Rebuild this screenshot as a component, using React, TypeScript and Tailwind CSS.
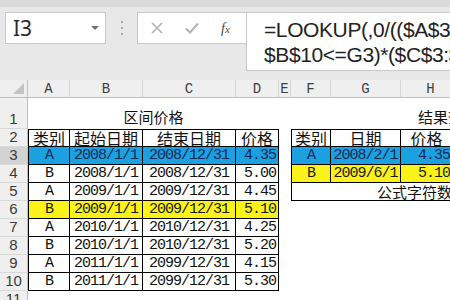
import type { ReactNode } from 'react';

const MONO = "font-['Liberation_Mono','Noto_Sans_CJK_SC',monospace]";
const CJK = "font-['Noto_Sans_CJK_SC',sans-serif]";

// column widths: A..H (H runs past the window edge)
const W = { A: 42, B: 73, C: 93, D: 43, E: 12, F: 40, G: 70, H: 60 };

type Fill = 'blue' | 'yellow' | null;

interface PriceRow {
  row: number;
  cat: string;
  start: string;
  end: string;
  price: string;
  fill: Fill;
}

const prices: PriceRow[] = [
  { row: 3, cat: 'A', start: '2008/1/1', end: '2008/12/31', price: '4.35', fill: 'blue' },
  { row: 4, cat: 'B', start: '2008/1/1', end: '2008/12/31', price: '5.00', fill: null },
  { row: 5, cat: 'A', start: '2009/1/1', end: '2009/12/31', price: '4.45', fill: null },
  { row: 6, cat: 'B', start: '2009/1/1', end: '2009/12/31', price: '5.10', fill: 'yellow' },
  { row: 7, cat: 'A', start: '2010/1/1', end: '2010/12/31', price: '4.25', fill: null },
  { row: 8, cat: 'B', start: '2010/1/1', end: '2010/12/31', price: '5.20', fill: null },
  { row: 9, cat: 'A', start: '2011/1/1', end: '2099/12/31', price: '4.15', fill: null },
  { row: 10, cat: 'B', start: '2011/1/1', end: '2099/12/31', price: '5.30', fill: null },
];

const results: { cat: string; date: string; price: string; fill: Fill }[] = [
  { cat: 'A', date: '2008/2/1', price: '4.35', fill: 'blue' },
  { cat: 'B', date: '2009/6/1', price: '5.10', fill: 'yellow' },
];

function fillClass(fill: Fill): string {
  if (fill === 'blue') return 'bg-[#1ba0e0] text-[#172a55]';
  if (fill === 'yellow') return 'bg-[#fbf21a] text-[#1a1a1a]';
  return 'bg-white text-[#111]';
}

function Cell({ w, className = '', children }: { w: number; className?: string; children?: ReactNode }) {
  return (
    <div className={`box-border flex h-full shrink-0 items-center overflow-visible whitespace-nowrap leading-[16px] ${className}`} style={{ width: w }}>
      {children}
    </div>
  );
}

function RowHead({ n, h, active = false }: { n: number; h: string; active?: boolean }) {
  return (
    <div className={`box-border flex w-[28px] shrink-0 items-end justify-center border-r border-b border-r-[#bfbfbf] border-b-[#d9d9d9] pb-[1px] font-['Liberation_Sans',sans-serif] text-[15px] leading-[16px] text-[#3a3a3a] ${h} ${active ? 'bg-[#d3d3d3]' : 'bg-[#efefef]'}`}>
      {n}
    </div>
  );
}

function Blank({ w }: { w: number }) {
  return <Cell w={w} className="bg-white" />;
}

export default function App() {
  const tb = 'border-black border-r border-b';
  const num = `${MONO} text-[15px] tracking-[-1px]`;
  return (
    <div className="h-[300px] w-[450px] overflow-hidden bg-[#e8e8e8]">
      <div className="h-[7px] bg-[#d9d9d9]" />

      {/* formula bar */}
      <div className="flex h-[73px] items-start pl-[5px] pt-[5px]">
        <div className="box-border flex h-[32px] w-[101px] shrink-0 items-center justify-between border border-[#c8c8c8] bg-white pl-[7px] pr-[6px]">
          <span className="font-['Noto_Sans',sans-serif] text-[21px] leading-none text-[#2a2a2a]">I3</span>
          <span className="h-0 w-0 border-x-[4px] border-t-[4px] border-x-transparent border-t-[#707070]" />
        </div>
        <div className="flex h-[32px] w-[31px] shrink-0 flex-col items-center justify-center gap-[4px]">
          <span className="h-[2px] w-[2px] bg-[#a8a8a8]" />
          <span className="h-[2px] w-[2px] bg-[#a8a8a8]" />
          <span className="h-[2px] w-[2px] bg-[#a8a8a8]" />
        </div>
        <div className="box-border flex h-[32px] w-[109px] shrink-0 items-center border border-r-0 border-[#c8c8c8] bg-white">
          <svg width="12" height="12" viewBox="0 0 12 12" className="ml-[13px]">
            <path d="M1 1 L11 11 M11 1 L1 11" stroke="#b4b4b4" strokeWidth="1.6" fill="none" />
          </svg>
          <svg width="14" height="12" viewBox="0 0 14 12" className="ml-[22px]">
            <path d="M1 6.5 L5 10.5 L13 1.5" stroke="#b4b4b4" strokeWidth="2" fill="none" />
          </svg>
          <span className="ml-[22px] font-['Liberation_Serif',serif] text-[14px] italic text-[#4a4a4a]">
            f<span className="text-[11px]">x</span>
          </span>
        </div>
        <div className="box-border h-[59px] min-w-0 flex-1 overflow-hidden border border-r-0 border-[#c8c8c8] bg-white pl-[17px] pt-[4px] font-['Liberation_Sans',sans-serif] text-[21px] leading-[25px] tracking-[-0.4px] whitespace-nowrap text-[#222]">
          <div>=LOOKUP(,0/(($A$3:$A$10=F3)*($B$3:</div>
          <div>$B$10&lt;=G3)*($C$3:$C$10&gt;=G3)),$D$3:$D$10)</div>
        </div>
      </div>

      {/* sheet */}
      <div className="flex flex-col">
        <div className="flex h-[18px]">
          <div className="relative box-border w-[28px] shrink-0 border-r border-b border-[#bfbfbf] bg-[#efefef]">
            <span className="absolute right-[3px] bottom-[3px] h-0 w-0 border-b-[11px] border-l-[11px] border-b-[#c4c4c4] border-l-transparent" />
          </div>
          {(Object.keys(W) as (keyof typeof W)[]).map((k) => (
            <Cell key={k} w={W[k]} className={`justify-center border-r border-b border-r-[#d5d5d5] border-b-[#bfbfbf] bg-[#efefef] ${MONO} text-[14px] text-[#404040]`}>
              {k}
            </Cell>
          ))}
        </div>

        {/* row 1: titles */}
        <div className="flex h-[31px]">
          <RowHead n={1} h="h-[31px]" />
          <Cell w={W.A + W.B + W.C + W.D} className={`items-end justify-center bg-white pb-[4px] ${CJK} text-[15px] text-[#111]`}>区间价格</Cell>
          <Blank w={W.E} />
          <Cell w={W.F + W.G + W.H} className={`items-end bg-white pb-[4px] pl-[127px] ${CJK} text-[15px] text-[#111]`}>结果查询</Cell>
        </div>

        {/* row 2: headers */}
        <div className="flex h-[18px]">
          <RowHead n={2} h="h-[18px]" />
          <Cell w={W.A} className={`${tb} border-t border-l justify-center bg-white ${CJK} text-[16px] text-[#111]`}>类别</Cell>
          <Cell w={W.B} className={`${tb} border-t justify-center bg-white ${CJK} text-[16px] text-[#111]`}>起始日期</Cell>
          <Cell w={W.C} className={`${tb} border-t justify-center bg-white ${CJK} text-[16px] text-[#111]`}>结束日期</Cell>
          <Cell w={W.D} className={`${tb} border-t justify-center bg-white ${CJK} text-[16px] text-[#111]`}>价格</Cell>
          <Blank w={W.E} />
          <Cell w={W.F} className={`${tb} border-t border-l justify-center bg-white ${CJK} text-[16px] text-[#111]`}>类别</Cell>
          <Cell w={W.G} className={`${tb} border-t justify-center bg-white ${CJK} text-[16px] text-[#111]`}>日期</Cell>
          <Cell w={W.H} className={`${tb} border-t justify-center bg-white pr-[8px] ${CJK} text-[16px] text-[#111]`}>价格</Cell>
        </div>

        {prices.map((p, i) => {
          const res = results[i];
          const f = fillClass(p.fill);
          return (
            <div key={p.row} className="flex h-[18px]">
              <RowHead n={p.row} h="h-[18px]" active={p.row === 3} />
              <Cell w={W.A} className={`${tb} border-l justify-center ${f} ${num}`}>{p.cat}</Cell>
              <Cell w={W.B} className={`${tb} justify-center ${f} ${num}`}>{p.start}</Cell>
              <Cell w={W.C} className={`${tb} justify-center ${f} ${num}`}>{p.end}</Cell>
              <Cell w={W.D} className={`${tb} justify-end pr-[2px] ${f} ${num}`}>{p.price}</Cell>
              <Blank w={W.E} />
              {res ? (
                <>
                  <Cell w={W.F} className={`${tb} border-l justify-center ${fillClass(res.fill)} ${num}`}>{res.cat}</Cell>
                  <Cell w={W.G} className={`${tb} justify-center ${fillClass(res.fill)} ${num}`}>{res.date}</Cell>
                  <Cell w={W.H} className={`${tb} justify-end pr-[10px] ${fillClass(res.fill)} ${num}`}>{res.price}</Cell>
                </>
              ) : i === 2 ? (
                <Cell w={W.F + W.G + W.H} className={`border-b border-l border-black bg-white pl-[85px] ${CJK} text-[15px] text-[#111]`}>公式字符数</Cell>
              ) : (
                <Blank w={W.F + W.G + W.H} />
              )}
            </div>
          );
        })}

        <div className="flex h-[18px]">
          <RowHead n={11} h="h-[18px]" />
          <Blank w={W.A + W.B + W.C + W.D + W.E + W.F + W.G + W.H} />
        </div>
      </div>
    </div>
  );
}
